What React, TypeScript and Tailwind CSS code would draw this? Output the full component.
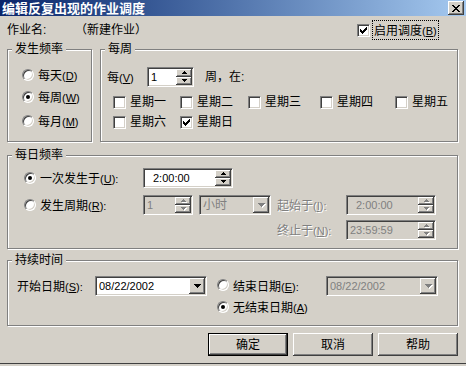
import React from "react";

const sunken =
  "border border-t-[#808080] border-l-[#808080] border-b-white border-r-white shadow-[inset_1px_1px_0_#404040,inset_-1px_-1px_0_#d4d0c8]";
const raised =
  "bg-[#d4d0c8] shadow-[inset_-1px_-1px_0_#404040,inset_1px_1px_0_#ffffff,inset_-2px_-2px_0_#808080,inset_2px_2px_0_#d4d0c8]";
const dim = "text-[#808080] [text-shadow:1px_1px_0_#ffffff]";

const Mn: React.FC<{ zh: string; k: string; colon?: boolean; off?: boolean }> = ({ zh, k, colon, off }) => (
  <span className={"whitespace-nowrap " + (off ? dim : "")}>
    <span className="text-[12px]">{zh}</span>
    <span className="text-[11px]">
      (<u className="underline-offset-1">{k}</u>){colon ? ":" : ""}
    </span>
  </span>
);

const Radio: React.FC<{ checked?: boolean }> = ({ checked }) => (
  <span className="inline-flex w-[12px] h-[12px] shrink-0 items-center justify-center rounded-full bg-white border border-t-[#808080] border-l-[#808080] border-b-white border-r-white shadow-[inset_1px_1px_0_#404040,inset_-1px_-1px_0_#d4d0c8]">
    {checked && <span className="w-[4px] h-[4px] rounded-full bg-black" />}
  </span>
);

const Check: React.FC<{ checked?: boolean }> = ({ checked }) => (
  <span className={"relative inline-block w-[13px] h-[13px] shrink-0 bg-white " + sunken}>
    {checked && (
      <svg className="absolute left-[2px] top-[2px]" width="7" height="7" viewBox="0 0 7 7" shapeRendering="crispEdges">
        <path
          d="M6 0h1v1h-1z M5 1h2v1h-2z M0 2h1v1h-1z M4 2h3v1h-3z M0 3h2v1h-2z M3 3h3v1h-3z M0 4h5v1h-5z M1 5h3v1h-3z M2 6h1v1h-1z"
          fill="#000"
        />
      </svg>
    )}
  </span>
);

const Arrow: React.FC<{ up?: boolean; big?: boolean; off?: boolean }> = ({ up, big, off }) => {
  const d = big
    ? "M0 0h7v1h-7z M1 1h5v1h-5z M2 2h3v1h-3z M3 3h1v1h-1z"
    : up
    ? "M2 0h1v1h-1z M1 1h3v1h-3z M0 2h5v1h-5z"
    : "M0 0h5v1h-5z M1 1h3v1h-3z M2 2h1v1h-1z";
  const w = big ? 7 : 5;
  const h = big ? 4 : 3;
  return (
    <svg width={w + 1} height={h + 1} viewBox={`0 0 ${w + 1} ${h + 1}`} shapeRendering="crispEdges">
      {off && <path d={d} fill="#fff" transform="translate(1 1)" />}
      <path d={d} fill={off ? "#808080" : "#000"} />
    </svg>
  );
};

const Spin: React.FC<{ w: string; value: string; off?: boolean; pl?: string }> = ({ w, value, off, pl }) => (
  <div className={`flex h-[20px] ${w} ${sunken} ${off ? "bg-[#d4d0c8]" : "bg-white"}`}>
    <span className={`flex-1 flex items-center text-[11px] ${pl ?? "pl-[3px]"} ${off ? "text-[#808080]" : "text-black"}`}>
      {value}
    </span>
    <div className="flex flex-col w-[17px] py-[1px] pr-[1px]">
      <div className={"flex-1 flex items-center justify-center pl-[1px] " + raised}>
        <Arrow up off={off} />
      </div>
      <div className={"flex-1 flex items-center justify-center pl-[1px] " + raised}>
        <Arrow off={off} />
      </div>
    </div>
  </div>
);

const Combo: React.FC<{ w: string; value: string; off?: boolean; cjk?: boolean }> = ({ w, value, off, cjk }) => (
  <div className={`flex h-[20px] ${w} ${sunken} ${off ? "bg-[#d4d0c8]" : "bg-white"}`}>
    <span
      className={`flex-1 flex items-center pl-[3px] ${cjk ? "text-[12px]" : "text-[11px]"} ${
        off ? "text-[#808080]" : "text-black"
      }`}
    >
      {value}
    </span>
    <div className="flex w-[17px] py-[1px] pr-[1px]">
      <div className={"flex-1 flex items-center justify-center pl-[1px] " + raised}>
        <Arrow big off={off} />
      </div>
    </div>
  </div>
);

const Group: React.FC<{ title: string; className: string; children?: React.ReactNode }> = ({
  title,
  className,
  children,
}) => (
  <div className={"relative border border-[#808080] shadow-[1px_1px_0_#ffffff,inset_1px_1px_0_#ffffff] " + className}>
    <span className="absolute -top-[8px] left-[4px] bg-[#d4d0c8] px-[3px] text-[12px] leading-[14px]">{title}</span>
    {children}
  </div>
);

const Btn: React.FC<{ label: string; main?: boolean }> = ({ label, main }) => (
  <div className={"h-[23px] w-[80px] " + (main ? "border border-black" : "")}>
    <div className={"h-full w-full flex items-center justify-center text-[12px] " + raised}>{label}</div>
  </div>
);

const App: React.FC = () => {
  const days1 = [
    { t: "星期一", w: "w-[67px]" },
    { t: "星期二", w: "w-[68px]" },
    { t: "星期三", w: "w-[72px]" },
    { t: "星期四", w: "w-[75px]" },
    { t: "星期五", w: "w-[60px]" },
  ];

  return (
    <div className="w-[466px] h-[366px] bg-[#d4d0c8] text-black overflow-hidden font-['Liberation_Sans','Noto_Sans_CJK_SC',sans-serif] leading-none">
      {/* title bar */}
      <div className="h-[16px] flex items-center justify-between bg-linear-to-r from-[#0a246a] to-[#a6caf0] pl-[2px] pr-[2px]">
        <span className="text-white font-bold text-[13px] leading-none">编辑反复出现的作业调度</span>
        <div className={"w-[16px] h-[14px] flex items-center justify-center " + raised}>
          <svg width="8" height="7" viewBox="0 0 8 7" shapeRendering="crispEdges">
            <path
              d="M0 0h2v1h-2z M6 0h2v1h-2z M1 1h2v1h-2z M5 1h2v1h-2z M2 2h4v1h-4z M3 3h2v1h-2z M2 4h4v1h-4z M1 5h2v1h-2z M5 5h2v1h-2z M0 6h2v1h-2z M6 6h2v1h-2z"
              fill="#000"
            />
          </svg>
        </div>
      </div>

      <div className="ml-[7px] w-[451px]">
        {/* job name row */}
        <div className="flex items-center h-[28px]">
          <span className="w-[68px] text-[12px]">作业名:</span>
          <span className="w-[282px] text-[12px]">（新建作业）</span>
          <Check checked />
          <span className="ml-[2px] border border-dotted border-black px-[1px] py-[1px]">
            <Mn zh="启用调度" k="B" />
          </span>
        </div>

        {/* frequency + weekly */}
        <div className="flex mt-[5px]">
          <Group title="发生频率" className="w-[85px] h-[93px]">
            <div className="flex flex-col pl-[14px] pt-[15px]">
              <div className="flex items-center gap-[4px] h-[20px]">
                <Radio />
                <Mn zh="每天" k="D" />
              </div>
              <div className="flex items-center gap-[4px] h-[20px] mt-[2px]">
                <Radio checked />
                <Mn zh="每周" k="W" />
              </div>
              <div className="flex items-center gap-[4px] h-[20px] mt-[4px]">
                <Radio />
                <Mn zh="每月" k="M" />
              </div>
            </div>
          </Group>

          <Group title="每周" className="ml-[8px] w-[358px] h-[93px]">
            <div className="flex items-center h-[20px] mt-[17px] pl-[6px]">
              <span className="w-[40px]">
                <Mn zh="每" k="V" />
              </span>
              <Spin w="w-[47px]" value="1" />
              <span className="ml-[11px] text-[12px]">周，在:</span>
            </div>
            <div className="flex items-center h-[20px] mt-[5px] pl-[12px]">
              {days1.map((d) => (
                <div key={d.t} className={"flex items-center gap-[4px] " + d.w}>
                  <Check />
                  <span className="text-[12px]">{d.t}</span>
                </div>
              ))}
            </div>
            <div className="flex items-center h-[20px] pl-[12px]">
              <div className="flex items-center gap-[4px] w-[67px]">
                <Check />
                <span className="text-[12px]">星期六</span>
              </div>
              <div className="flex items-center gap-[4px]">
                <Check checked />
                <span className="text-[12px]">星期日</span>
              </div>
            </div>
          </Group>
        </div>

        {/* daily frequency */}
        <Group title="每日频率" className="mt-[13px] w-[451px] h-[94px]">
          <div className="flex items-center h-[20px] mt-[12px] pl-[16px]">
            <div className="flex items-center gap-[4px] w-[119px]">
              <Radio checked />
              <Mn zh="一次发生于" k="U" colon />
            </div>
            <Spin w="w-[90px]" value="2:00:00" pl="pl-[9px]" />
          </div>
          <div className="flex items-center h-[20px] mt-[7px] pl-[16px]">
            <div className="flex items-center gap-[4px] w-[119px]">
              <Radio />
              <Mn zh="发生周期" k="R" colon />
            </div>
            <Spin w="w-[50px]" value="1" off />
            <Combo w="w-[72px] ml-[6px]" value="小时" off cjk />
            <span className="ml-[6px] w-[69px]">
              <Mn zh="起始于" k="I" colon off />
            </span>
            <Spin w="w-[90px]" value="2:00:00" off pl="pl-[9px]" />
          </div>
          <div className="flex items-center h-[20px] mt-[5px] pl-[269px]">
            <span className="w-[69px]">
              <Mn zh="终止于" k="N" colon off />
            </span>
            <Spin w="w-[90px]" value="23:59:59" off />
          </div>
        </Group>

        {/* duration */}
        <Group title="持续时间" className="mt-[11px] w-[451px] h-[66px]">
          <div className="flex items-center h-[20px] mt-[15px] pl-[9px]">
            <span className="w-[78px]">
              <Mn zh="开始日期" k="S" colon />
            </span>
            <Combo w="w-[112px]" value="08/22/2002" />
            <span className="ml-[10px]">
              <Radio />
            </span>
            <span className="ml-[4px] w-[93px]">
              <Mn zh="结束日期" k="E" colon />
            </span>
            <Combo w="w-[112px]" value="08/22/2002" off />
          </div>
          <div className="flex items-center gap-[4px] h-[20px] mt-[1px] pl-[209px]">
            <Radio checked />
            <Mn zh="无结束日期" k="A" />
          </div>
        </Group>

        {/* buttons */}
        <div className="flex justify-end gap-[5px] mt-[7px]">
          <Btn label="确定" main />
          <Btn label="取消" />
          <Btn label="帮助" />
        </div>
      </div>

      {/* window bottom edge */}
      <div className="mt-[7px] h-[1px] bg-[#404040]" />
    </div>
  );
};

export default App;
